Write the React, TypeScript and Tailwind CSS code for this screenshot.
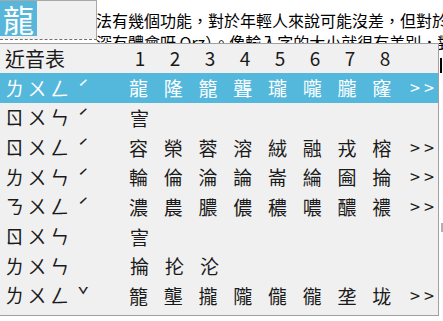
import React from 'react';

interface Row {
  zhuyin: string;
  tone: string;
  chars: string[];
  more: boolean;
}

const rows: Row[] = [
  { zhuyin: 'ㄌㄨㄥ', tone: 'ˊ', chars: ['龍', '隆', '籠', '聾', '瓏', '嚨', '朧', '窿'], more: true },
  { zhuyin: 'ㄖㄨㄣ', tone: 'ˊ', chars: ['㝘'], more: false },
  { zhuyin: 'ㄖㄨㄥ', tone: 'ˊ', chars: ['容', '榮', '蓉', '溶', '絨', '融', '戎', '榕'], more: true },
  { zhuyin: 'ㄌㄨㄣ', tone: 'ˊ', chars: ['輪', '倫', '淪', '論', '崙', '綸', '圇', '掄'], more: true },
  { zhuyin: 'ㄋㄨㄥ', tone: 'ˊ', chars: ['濃', '農', '膿', '儂', '穠', '噥', '醲', '禯'], more: true },
  { zhuyin: 'ㄖㄨㄣ', tone: '', chars: ['㝘'], more: false },
  { zhuyin: 'ㄌㄨㄣ', tone: '', chars: ['掄', '抡', '沦'], more: false },
  { zhuyin: 'ㄌㄨㄥ', tone: 'ˇ', chars: ['籠', '壟', '攏', '隴', '儱', '徿', '垄', '垅'], more: true },
];

const font = { fontFamily: '"Noto Sans CJK TC", "Microsoft JhengHei", sans-serif' };

const App: React.FC = () => {
  return (
    <div className="relative w-[443px] h-[321px] bg-white overflow-hidden text-[#1a1a1a]" style={font}>
      {/* document text underneath */}
      <div className="pl-[96px] pt-[9px] text-[16px] leading-[22px] whitespace-nowrap text-black">
        <div>法有幾個功能，對於年輕人來說可能沒差，但對於年長者</div>
        <div>深有體會呀 Orz）。像輸入字的大小就很有差別，對於</div>
      </div>

      {/* caret + scroll marks at the right edge */}
      <div className="absolute left-[440px] top-[58px] w-[2px] h-[15px] bg-black" />
      <div className="absolute left-[441px] top-[223px] w-[2px] h-[9px] bg-[#b0b0b0]" />

      {/* composition box */}
      <div className="absolute left-0 top-0 w-[97px] h-[39px] bg-[#f0f0f0] border-r border-t border-[#a8a8a8]">
        <div className="w-[37px] h-[35px] bg-[#58b6da] text-white text-[31px] leading-[35px] text-center">龍</div>
      </div>
      <div className="absolute left-0 top-[39px] w-[97px] border-t border-dashed border-[#707070]" />

      {/* candidate popup */}
      <div className="absolute left-0 top-[43px] w-[439px] h-[273px] bg-[#f0f0f0] border-t border-r border-b border-[#a0a0a0] text-[19px]">
        <div className="flex items-center h-[29px]">
          <div className="w-[130px] pl-[5px] text-[20px]">近音表</div>
          {[1, 2, 3, 4, 5, 6, 7, 8].map((n) => (
            <div key={n} className="w-[35px]">
              <div className="w-[20px] text-center">{n}</div>
            </div>
          ))}
        </div>
        {rows.map((row, i) => (
          <div
            key={i}
            className={`flex items-center h-[29.7px] ${i === 0 ? 'bg-[#53b8db] text-white' : ''}`}
          >
            <div className="flex w-[130px] pl-[5px] whitespace-nowrap">
              <span className="tracking-[3.5px]">{row.zhuyin}</span>
              <span className="ml-[5px]">{row.tone}</span>
            </div>
            {Array.from({ length: 8 }).map((_, j) => (
              <div key={j} className="w-[35px] leading-none">
                {row.chars[j] ?? ''}
              </div>
            ))}
            {row.more && <div className="pl-[3px] tracking-[4px] text-[18px]">&gt;&gt;</div>}
          </div>
        ))}
      </div>
    </div>
  );
};

export default App;
